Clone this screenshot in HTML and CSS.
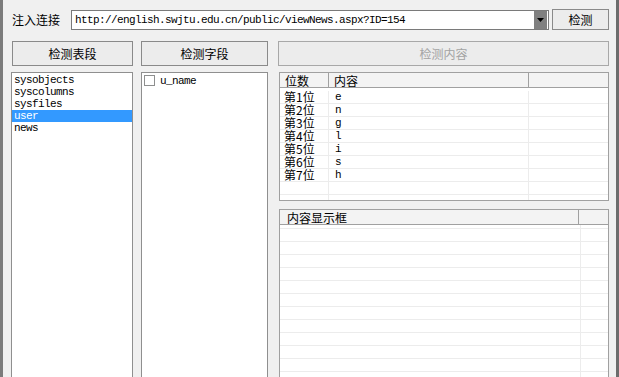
FILE: index.html
```html
<!DOCTYPE html>
<html>
<head>
<meta charset="utf-8">
<link rel="stylesheet" href="styles.css">
</head>
<body>
<div class="window">
  <div class="top">
    <span class="lbl">注入连接</span>
    <div class="combo">
      <span class="url">http://english.swjtu.edu.cn/public/viewNews.aspx?ID=154</span>
      <span class="drop"><svg width="7" height="4" viewBox="0 0 7 4"><path d="M0 0H7L3.5 4Z" fill="#000"/></svg></span>
    </div>
    <button class="btn btn-check">检测</button>
  </div>
  <div class="main">
    <div class="col col1">
      <button class="btn">检测表段</button>
      <div class="list">
        <div class="item">sysobjects</div>
        <div class="item">syscolumns</div>
        <div class="item">sysfiles</div>
        <div class="item sel">user</div>
        <div class="item">news</div>
      </div>
    </div>
    <div class="col col2">
      <button class="btn">检测字段</button>
      <div class="list">
        <div class="chk"><span class="box"></span><span class="mono">u_name</span></div>
      </div>
    </div>
    <div class="col col3">
      <button class="btn disabled">检测内容</button>
      <div class="lv lv1">
        <div class="hdr">
          <div class="h c1">位数</div>
          <div class="h c2">内容</div>
          <div class="h c3"></div>
        </div>
        <div class="body b1">
          <div class="row"><div class="c c1">第1位</div><div class="c c2 mono">e</div><div class="c c3"></div></div>
          <div class="row"><div class="c c1">第2位</div><div class="c c2 mono">n</div><div class="c c3"></div></div>
          <div class="row"><div class="c c1">第3位</div><div class="c c2 mono">g</div><div class="c c3"></div></div>
          <div class="row"><div class="c c1">第4位</div><div class="c c2 mono">l</div><div class="c c3"></div></div>
          <div class="row"><div class="c c1">第5位</div><div class="c c2 mono">i</div><div class="c c3"></div></div>
          <div class="row"><div class="c c1">第6位</div><div class="c c2 mono">s</div><div class="c c3"></div></div>
          <div class="row"><div class="c c1">第7位</div><div class="c c2 mono">h</div><div class="c c3"></div></div>
          <div class="row"><div class="c c1"></div><div class="c c2"></div><div class="c c3"></div></div>
          <div class="row"><div class="c c1"></div><div class="c c2"></div><div class="c c3"></div></div>
        </div>
      </div>
      <div class="lv lv2">
        <div class="hdr">
          <div class="h d1">内容显示框</div>
          <div class="h d2"></div>
        </div>
        <div class="body">
          <div class="row r0"><div class="c d1"></div><div class="c d2"></div></div>
          <div class="row"><div class="c d1"></div><div class="c d2"></div></div>
          <div class="row"><div class="c d1"></div><div class="c d2"></div></div>
          <div class="row"><div class="c d1"></div><div class="c d2"></div></div>
          <div class="row"><div class="c d1"></div><div class="c d2"></div></div>
          <div class="row"><div class="c d1"></div><div class="c d2"></div></div>
          <div class="row"><div class="c d1"></div><div class="c d2"></div></div>
          <div class="row"><div class="c d1"></div><div class="c d2"></div></div>
          <div class="row"><div class="c d1"></div><div class="c d2"></div></div>
          <div class="row"><div class="c d1"></div><div class="c d2"></div></div>
          <div class="row"><div class="c d1"></div><div class="c d2"></div></div>
          <div class="row"><div class="c d1"></div><div class="c d2"></div></div>
          <div class="row"><div class="c d1"></div><div class="c d2"></div></div>
        </div>
      </div>
    </div>
  </div>
</div>
</body>
</html>
```

FILE: styles.css
```css
html, body {
  margin: 0;
  padding: 0;
}
body {
  background: #f0f0f0;
  width: 619px;
  height: 377px;
  overflow: hidden;
  font-family: "Noto Sans CJK SC", "Liberation Sans", sans-serif;
  font-size: 12px;
  color: #000;
}
.window {
  box-sizing: border-box;
  width: 619px;
  height: 377px;
  overflow: hidden;
  border-left: 3px solid #7b7b7b;
  border-right: 3px solid #6c6c6c;
  padding: 9px 7px 0 8px;
  background: #f0f0f0;
}
.top {
  display: flex;
  align-items: center;
  height: 21px;
}
.lbl {
  margin-left: 1px;
  width: 48px;
  margin-right: 11px;
  font-size: 12px;
  line-height: 14px;
  white-space: nowrap;
}
.combo {
  box-sizing: border-box;
  width: 478px;
  height: 20px;
  border: 1px solid #7a7a7a;
  background: #fff;
  display: flex;
  align-items: center;
}
.url, .mono {
  font-family: "Liberation Mono", "DejaVu Sans Mono", monospace;
  font-size: 11px;
  letter-spacing: -0.6px;
}
.url {
  flex: 1;
  padding-left: 3px;
  white-space: nowrap;
  overflow: hidden;
}
.drop {
  width: 13px;
  height: 18px;
  margin-right: 1px;
  background: #808080;
  display: flex;
  align-items: center;
  justify-content: center;
}
.btn {
  box-sizing: border-box;
  height: 25px;
  border: 1px solid #8a8a8a;
  background: #ececec;
  font-family: "Noto Sans CJK SC", sans-serif;
  font-size: 12px;
  color: #000;
  padding: 0;
  margin: 0;
  border-radius: 0;
}
.btn-check {
  width: 57px;
  height: 21px;
  margin-left: 3px;
}
.btn.disabled {
  color: #a3a3a3;
  border-color: #a8a8a8;
}
.main {
  display: flex;
  margin-top: 11px;
  height: 350px;
}
.col {
  display: flex;
  flex-direction: column;
}
.col1 { width: 122px; }
.col1 .btn { margin-left: 1px; }
.col2 { width: 127px; margin-left: 8px; }
.col3 { width: 331px; margin-left: 10px; }
.list {
  flex: 1;
  margin-top: 6px;
  border: 1px solid #8f8f8f;
  background: #fff;
  padding-top: 1px;
}
.item {
  height: 12px;
  line-height: 12px;
  padding-left: 2px;
  white-space: nowrap;
  font-family: "Liberation Mono", "DejaVu Sans Mono", monospace;
  font-size: 11px;
  letter-spacing: -0.6px;
}
.item.sel {
  background: #3399ff;
  color: #fff;
}
.chk {
  display: flex;
  align-items: center;
  height: 13px;
  padding-left: 2px;
}
.box {
  box-sizing: border-box;
  width: 11px;
  height: 11px;
  border: 1px solid #8e8f8f;
  background: #fff;
  margin-right: 5px;
}
.lv {
  margin-left: 1px;
  border: 1px solid #a0a0a0;
  background: #fff;
  overflow: hidden;
}
.lv1 {
  margin-top: 6px;
  height: 129px;
  box-sizing: border-box;
}
.lv2 {
  margin-top: 8px;
  flex: 1;
}
.hdr {
  display: flex;
  height: 14px;
  border-bottom: 1px solid #a0a0a0;
  background: #f3f3f3;
}
.h {
  box-sizing: border-box;
  height: 14px;
  line-height: 15px;
  padding-left: 5px;
  font-size: 12px;
  white-space: nowrap;
}
.c1 { width: 49px; }
.c2 { width: 200px; }
.c3 { flex: 1; }
.hdr .c1, .hdr .c2 { border-right: 1px solid #a0a0a0; }
.d1 { width: 299px; }
.d2 { flex: 1; }
.hdr .d1 { border-right: 1px solid #a0a0a0; padding-left: 7px; }
.body.b1 {
  padding-top: 1px;
}
.row {
  display: flex;
  box-sizing: border-box;
  height: 13px;
  border-bottom: 1px solid #ececec;
}
.b1 .row:first-child {
  height: 15px;
  padding-top: 2px;
}
.row.r0 {
  height: 4px;
}
.c {
  box-sizing: border-box;
  height: 100%;
  line-height: 12px;
  white-space: nowrap;
}
.row .c1, .row .c2 { border-right: 1px solid #ececec; }
.row .d1 { border-right: 1px solid #ececec; width: 301px; }
.row .c1 { padding-left: 4px; font-size: 12px; }
.row .c2 { padding-left: 6px; }
```
